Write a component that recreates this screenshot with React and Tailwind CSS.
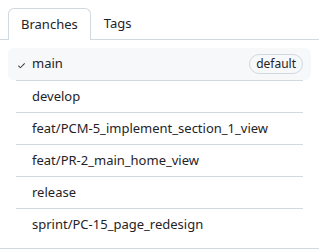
export default function App() {
  const branches = [
    "develop",
    "feat/PCM-5_implement_section_1_view",
    "feat/PR-2_main_home_view",
    "release",
    "sprint/PC-15_page_redesign",
  ];
  return (
    <div className="w-[319px] h-[252px] bg-white text-[#1f2328]" style={{ fontFamily: '"Noto Sans", sans-serif' }}>
      <div className="flex pt-2 pl-2 border-b border-[#d1d9e0]">
        <div className="h-[32px] px-[12px] flex items-center text-[13px] border border-b-0 border-[#d1d9e0] rounded-t-[6px] bg-white -mb-px">Branches</div>
        <div className="h-[31px] px-[13px] flex items-center text-[13px]">Tags</div>
      </div>
      <div className="border-b border-[#d1d9e0] pt-2 pb-2 px-2">
        <div className="h-[32px] flex items-center rounded-[6px] bg-[#f6f8fa] relative">
          <svg className="absolute left-[9px] top-[13px]" width="9" height="9" viewBox="0 0 16 16" fill="currentColor"><path d="M13.78 4.22a.75.75 0 0 1 0 1.06l-7.25 7.25a.75.75 0 0 1-1.06 0L2.22 9.28a.75.75 0 0 1 1.06-1.06L6 10.94l6.72-6.72a.75.75 0 0 1 1.06 0Z"/></svg>
          <span className="ml-6 text-[13px]">main</span>
          <span className="ml-auto mr-2 h-[20px] px-[6px] flex items-center rounded-full border border-[#d1d9e0] text-[12px] text-[#1f2328]">default</span>
        </div>
        {branches.map((b) => (
          <div key={b} className="mx-2 h-[32px] flex items-center border-t border-[#d1d9e0] text-[13px]">
            <span className="ml-4">{b}</span>
          </div>
        ))}
      </div>
    </div>
  );
}
